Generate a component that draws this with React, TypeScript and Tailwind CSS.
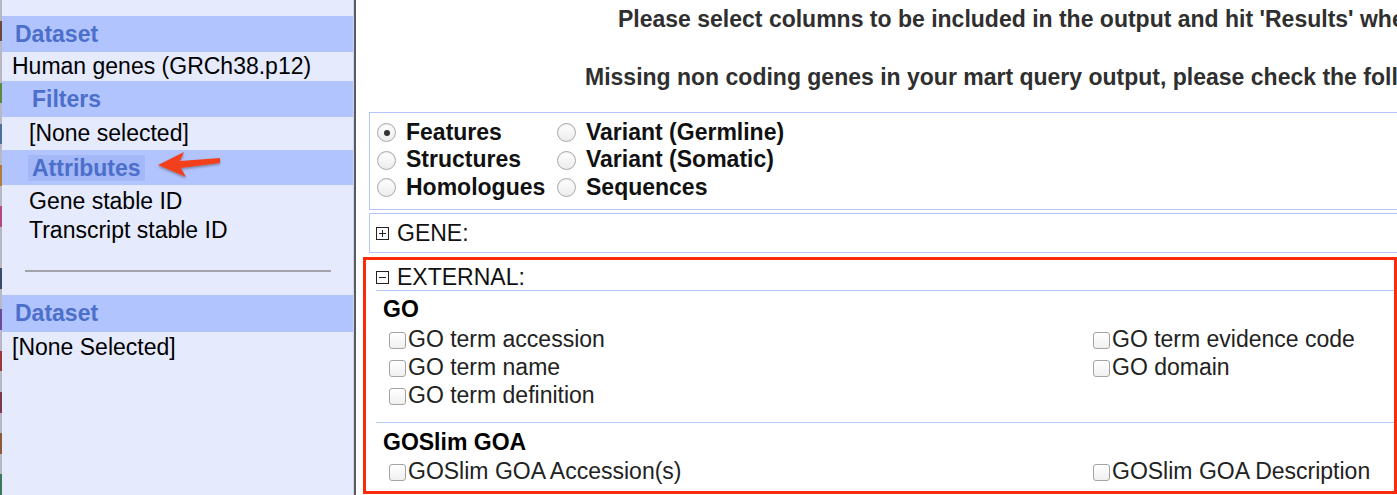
import React from "react";

function PlusMinus({ minus }: { minus?: boolean }) {
  return (
    <svg width="13" height="13" viewBox="0 0 13 13" className="shrink-0">
      <rect x="0.5" y="0.5" width="12" height="12" fill="white" stroke="#222" />
      <line x1="3" y1="6.5" x2="10" y2="6.5" stroke="#222" />
      {!minus && <line x1="6.5" y1="3" x2="6.5" y2="10" stroke="#222" />}
    </svg>
  );
}

function Radio({ checked, label }: { checked?: boolean; label: string }) {
  return (
    <div className="flex items-center h-[27.5px]">
      <span className="w-[19px] h-[19px] rounded-full border border-[#aaaaaa] bg-linear-to-b from-white to-[#ececec] flex items-center justify-center shrink-0 shadow-[inset_0_1px_1px_rgba(0,0,0,0.08)] mt-[2px]">
        {checked && <span className="w-[6px] h-[6px] rounded-full bg-[#333]" />}
      </span>
      <span className="ml-[10px] font-bold text-[#111] whitespace-nowrap">{label}</span>
    </div>
  );
}

function Check({ label }: { label: string }) {
  return (
    <div className="flex items-center h-[28px]">
      <span className="w-[17px] h-[17px] rounded-[3px] border border-[#a3a3a3] bg-linear-to-b from-white to-[#f0f0f0] shrink-0 mt-[3px]" />
      <span className="ml-[2px] text-[#222] whitespace-nowrap">{label}</span>
    </div>
  );
}

const stripColors = [
  "#b8b8c4", "#6b4a3a", "#b8b8c4", "#b8b8c4", "#5a8a3a", "#b8b8c4", "#4a6f9a", "#b8b8c4",
  "#b07a3a", "#b8b8c4", "#b04a7a", "#b8b8c4", "#b8b8c4", "#3a4a6a", "#b8b8c4", "#6a4a9a",
  "#b8b8c4", "#9a3a3a", "#b8b8c4", "#7a3a4a", "#b8b8c4", "#8a5a3a", "#b8b8c4", "#3a7a5a",
];

export default function App() {
  return (
    <div className="flex w-[1397px] h-[495px] overflow-hidden bg-white font-['Liberation_Sans',Arial,Helvetica,sans-serif] text-[23px] text-black">
      {/* left edge strip */}
      <div className="w-[2px] flex flex-col shrink-0">
        {stripColors.map((c, i) => (
          <div key={i} className="flex-1" style={{ backgroundColor: c }} />
        ))}
      </div>

      {/* sidebar */}
      <div className="relative w-[351px] shrink-0 bg-[#e5eafd] flex flex-col">
        <div className="h-[16px]" />
        <div className="h-[36px] bg-[#b2c4fd] pl-[13px] leading-[36px] font-bold text-[#4b6fcb]">Dataset</div>
        <div className="h-[29px] pl-[10px] leading-[29px] whitespace-nowrap">Human genes (GRCh38.p12)</div>
        <div className="h-[36px] bg-[#b2c4fd] pl-[30px] leading-[36px] font-bold text-[#4b6fcb]">Filters</div>
        <div className="h-[33px] pl-[27px] leading-[33px]">[None selected]</div>
        <div className="h-[35px] bg-[#b2c4fd] pl-[26px] flex items-center">
          <span className="h-[26px] px-[4px] leading-[26px] bg-[#a4b7f6] font-bold text-[#4b6fcb]">Attributes</span>
        </div>
        <div className="pt-[2px]">
          <div className="h-[29px] pl-[27px] leading-[29px]">Gene stable ID</div>
          <div className="h-[29px] pl-[27px] leading-[29px]">Transcript stable ID</div>
        </div>
        <div className="mt-[25px] ml-[23px] w-[306px] h-[2px] bg-[#a2a3ab]" />
        <div className="mt-[23px] h-[37px] bg-[#b2c4fd] pl-[13px] leading-[37px] font-bold text-[#4b6fcb]">Dataset</div>
        <div className="h-[30px] pl-[10px] leading-[30px]">[None Selected]</div>

        {/* annotation arrow */}
        <svg
          className="absolute left-[153px] top-[147px]"
          width="70"
          height="34"
          viewBox="0 0 70 34"
        >
          <defs>
            <filter id="sh" x="-20%" y="-20%" width="140%" height="160%">
              <feDropShadow dx="0" dy="1.5" stdDeviation="1.2" floodColor="#000" floodOpacity="0.35" />
            </filter>
          </defs>
          <polygon
            points="3,18 29,5 25,14 65,11 65,16 26,21 31,30"
            fill="#f2401f"
            filter="url(#sh)"
          />
        </svg>
      </div>

      {/* sidebar border */}
      <div className="w-[1px] shrink-0 bg-[#cdd4ef]" />
      <div className="w-[2px] shrink-0 bg-[#5b5b5b]" />

      {/* main */}
      <div className="flex-1 min-w-0 flex flex-col">
        <div className="pt-[5px] h-[33px] pl-[262px] leading-[28px] font-bold text-[#2f2f2f] whitespace-nowrap">
          Please select columns to be included in the output and hit 'Results' when ready
        </div>
        <div className="mt-[30px] h-[28px] pl-[229px] leading-[28px] font-bold text-[#2f2f2f] whitespace-nowrap">
          Missing non coding genes in your mart query output, please check the following
        </div>

        {/* radio box */}
        <div className="mt-[21px] ml-[13px] w-[1100px] h-[98px] border border-[#b3c5fc] pt-[5px] pl-[7px]">
          <div className="grid grid-cols-[180px_1fr] grid-rows-3 grid-flow-col">
            <Radio checked label="Features" />
            <Radio label="Structures" />
            <Radio label="Homologues" />
            <Radio label="Variant (Germline)" />
            <Radio label="Variant (Somatic)" />
            <Radio label="Sequences" />
          </div>
        </div>

        {/* GENE box */}
        <div className="mt-[3px] ml-[13px] w-[1100px] h-[40px] border border-[#b3c5fc] pl-[6px] flex items-center">
          <PlusMinus />
          <span className="ml-[8px] text-[#111]">GENE:</span>
        </div>

        {/* EXTERNAL box */}
        <div className="mt-[4px] ml-[7px] w-[1034px] h-[237px] border-[3px] border-[#fb2a0a] pl-[10px]">
          <div className="h-[31px] pt-[4px] border-b border-[#b8c8fb] flex items-start">
            <div className="h-[27px] flex items-center">
              <PlusMinus minus />
              <span className="ml-[8px] text-[#111] leading-[27px]">EXTERNAL:</span>
            </div>
          </div>
          <div className="pt-[4px] pl-[7px] h-[32px] leading-[28px] font-bold">GO</div>
          <div className="mt-[2px] pl-[13px] grid grid-cols-[704px_1fr]">
            <div>
              <Check label="GO term accession" />
              <Check label="GO term name" />
              <Check label="GO term definition" />
            </div>
            <div>
              <Check label="GO term evidence code" />
              <Check label="GO domain" />
            </div>
          </div>
          <div className="mt-[13px] h-[1px] bg-[#b8c8fb]" />
          <div className="pt-[5px] pl-[7px] h-[33px] leading-[28px] font-bold">GOSlim GOA</div>
          <div className="mt-[1px] pl-[13px] grid grid-cols-[704px_1fr]">
            <Check label="GOSlim GOA Accession(s)" />
            <Check label="GOSlim GOA Description" />
          </div>
        </div>
      </div>
    </div>
  );
}
